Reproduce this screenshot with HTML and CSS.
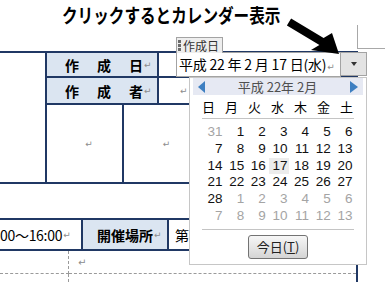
FILE: index.html
```html
<!DOCTYPE html>
<html lang="ja">
<head>
<meta charset="utf-8">
<title>カレンダー表示</title>
<link rel="stylesheet" href="styles.css">
</head>
<body>
<div class="page">
  <header class="head"><span class="title">クリックするとカレンダー表示</span></header>

  <section class="t1">
    <div class="c-left"></div>
    <div class="c-right">
      <div class="row r1">
        <div class="lbl">作　成　日<span class="ret">↵</span></div>
        <div class="val"></div>
      </div>
      <div class="row r2">
        <div class="lbl">作　成　者<span class="ret">↵</span></div>
        <div class="val v2"><span class="ret">↵</span></div>
      </div>
      <div class="row r3">
        <div class="cellA"><span class="ret">↵</span></div>
        <div class="cellB"><span class="ret">↵</span></div>
        <div class="cellC"></div>
      </div>
    </div>
  </section>

  <div class="gap"></div>

  <section class="t2">
    <div class="time">00～16:00<span class="ret">↵</span></div>
    <div class="lbl2">開催場所<span class="ret">↵</span></div>
    <div class="place">第</div>
  </section>

  <section class="t3">
    <div class="d1"></div>
    <div class="d2"><span class="ret">↵</span></div>
    <div class="d3"></div>
    <div class="d4"></div>
  </section>

  <div class="corner"></div>

  <div class="ctrl">
    <div class="tag"><span class="grip"><i></i><i></i><i></i></span>作成日</div>
    <div class="field-row">
      <div class="field">平成 22 年 2 月 17 日(水)<span class="ret">↵</span></div>
      <div class="drop"><span class="dtri"></span></div>
    </div>
  </div>

  <div class="cal">
    <div class="cal-bar">
      <span class="tri-l"></span>
      <span class="cal-title">平成 22年 2月</span>
      <span class="tri-r"></span>
    </div>
    <div class="cal-week">
      <span>日</span><span>月</span><span>火</span><span>水</span><span>木</span><span>金</span><span>土</span>
    </div>
    <div class="cal-sep"></div>
    <div class="cal-days">
      <span class="o">31</span><span>1</span><span>2</span><span>3</span><span>4</span><span>5</span><span>6</span>
      <span>7</span><span>8</span><span>9</span><span>10</span><span>11</span><span>12</span><span>13</span>
      <span>14</span><span>15</span><span>16</span><span class="sel">17</span><span>18</span><span>19</span><span>20</span>
      <span>21</span><span>22</span><span>23</span><span>24</span><span>25</span><span>26</span><span>27</span>
      <span>28</span><span class="o">1</span><span class="o">2</span><span class="o">3</span><span class="o">4</span><span class="o">5</span><span class="o">6</span>
      <span class="o">7</span><span class="o">8</span><span class="o">9</span><span class="o">10</span><span class="o">11</span><span class="o">12</span><span class="o">13</span>
    </div>
    <div class="cal-sep sep2"></div>
    <div class="cal-foot"><button class="today" type="button">今日(<u>T</u>)</button></div>
  </div>

  <svg class="arrow" width="385" height="282" viewBox="0 0 385 282" aria-hidden="true">
    <polygon points="291.1,18.6 323.6,38.1 332,33 339,54 311,50 319.4,44.9 286.9,25.4" fill="#000"/>
  </svg>
</div>
</body>
</html>
```

FILE: styles.css
```css
* { box-sizing: border-box; }
html, body { margin: 0; padding: 0; background: #fff; }
body {
  width: 385px;
  height: 282px;
  overflow: hidden;
  font-family: "Noto Sans CJK JP", "Noto Sans", sans-serif;
  color: #000;
}
.page {
  position: relative;
  width: 385px;
  height: 282px;
  overflow: hidden;
}

/* heading annotation */
.head {
  height: 51px;
  padding: 4px 0 0 62px;
}
.title {
  display: inline-block;
  font-size: 19.5px;
  line-height: 22px;
  font-weight: 700;
  white-space: nowrap;
  transform: scaleX(0.8);
  transform-origin: left top;
}

.ret {
  font-family: "DejaVu Sans", sans-serif;
  font-size: 9px;
  color: #8c8c8c;
  font-weight: 400;
  margin-left: 1px;
}

/* table 1 */
.t1 {
  display: flex;
  width: 358px;
  height: 133px;
  border-top: 2px solid #203864;
  border-bottom: 2px solid #203864;
  border-right: 2px solid #203864;
}
.c-left { width: 45px; }
.c-right {
  flex: 1;
  display: flex;
  flex-direction: column;
  border-left: 2px solid #203864;
}
.row { display: flex; }
.r1 { height: 25px; border-bottom: 2px solid #203864; }
.r2 { height: 27px; border-bottom: 2px solid #203864; }
.r3 { flex: 1; }
.lbl {
  width: 112px;
  background: #dbe5f1;
  border-right: 2px solid #203864;
  font-size: 14px;
  font-weight: 700;
  letter-spacing: 2px;
  padding-left: 18px;
  display: flex;
  align-items: center;
  white-space: nowrap;
}
.lbl .ret { letter-spacing: 0; margin-left: -1px; }
.val { flex: 1; display: flex; align-items: center; }
.v2 { padding-left: 20px; }
.cellA, .cellB {
  display: flex;
  align-items: center;
  justify-content: center;
  padding-left: 8px;
  border-right: 2px solid #203864;
}
.cellA { width: 77px; }
.cellB { width: 78px; }
.cellC { flex: 1; }

.gap { height: 34px; }

/* table 2 */
.t2 {
  display: flex;
  width: 358px;
  height: 33px;
  border-top: 2px solid #203864;
  border-bottom: 2px solid #203864;
  border-right: 2px solid #203864;
  font-size: 14px;
}
.time {
  width: 83px;
  border-right: 2px solid #203864;
  display: flex;
  align-items: center;
  white-space: nowrap;
  letter-spacing: -0.3px;
}
.lbl2 {
  width: 86px;
  background: #dbe5f1;
  border-right: 2px solid #203864;
  font-weight: 700;
  padding-left: 14px;
  display: flex;
  align-items: center;
  white-space: nowrap;
}
.place {
  flex: 1;
  padding-left: 6px;
  display: flex;
  align-items: center;
}

/* dashed area */
.t3 {
  display: grid;
  grid-template-columns: 69px 1fr;
  grid-template-rows: 23px 1fr;
  width: 358px;
  height: 31px;
  border-right: 2px solid #203864;
}
.d1 { border-right: 1px dashed #9a9a9a; border-bottom: 1px dashed #9a9a9a; }
.d2 { border-bottom: 1px dashed #9a9a9a; padding-left: 8px; display: flex; align-items: center; }
.d2 .ret { font-size: 10px; }
.d3 { border-right: 1px dashed #9a9a9a; }

/* page corner mark */
.corner {
  position: absolute;
  left: 357px;
  top: 25px;
  width: 28px;
  height: 24px;
  border-left: 1px solid #a8a8a8;
  border-bottom: 1px solid #a8a8a8;
}

/* content control */
.ctrl {
  position: absolute;
  left: 176px;
  top: 37px;
  width: 191px;
}
.tag {
  display: flex;
  align-items: center;
  width: 47px;
  height: 16px;
  margin-bottom: -1px;
  background: #eeeeee;
  border: 1px solid #a3a3a3;
  border-bottom: none;
  font-size: 12px;
  line-height: 14px;
  color: #333;
  padding-left: 1px;
  position: relative;
  z-index: 1;
}
.grip {
  display: flex;
  flex-direction: column;
  gap: 1px;
  margin-right: 2px;
}
.grip i {
  display: block;
  width: 3px;
  height: 3px;
  background: #6b6b6b;
}
.field-row { display: flex; }
.field {
  width: 165px;
  height: 25px;
  background: #fff;
  border: 1px solid #a3a3a3;
  font-size: 14px;
  line-height: 22px;
  padding-left: 2px;
  white-space: nowrap;
  letter-spacing: -0.2px;
}
.field .ret { letter-spacing: 0; }
.drop {
  width: 27px;
  height: 24px;
  margin-left: -1px;
  background: #e3e3e3;
  border: 1px solid #a3a3a3;
  display: flex;
  align-items: center;
  justify-content: center;
}
.dtri {
  width: 0;
  height: 0;
  border-left: 3.5px solid transparent;
  border-right: 3.5px solid transparent;
  border-top: 4px solid #333;
}

/* calendar popup */
.cal {
  position: absolute;
  left: 189px;
  top: 77px;
  width: 178px;
  height: 188px;
  background: #fff;
  border: 1px solid #c6c6c6;
  padding: 0 3px;
  font-size: 13px;
}
.cal-bar {
  height: 17px;
  background: #e6e9f3;
  display: flex;
  align-items: center;
  justify-content: space-between;
  padding: 0 5px;
}
.tri-l, .tri-r {
  width: 0;
  height: 0;
  border-top: 6.5px solid transparent;
  border-bottom: 6.5px solid transparent;
}
.tri-l { border-right: 7px solid #3e7fc1; }
.tri-r { border-left: 8px solid #3e7fc1; }
.cal-title {
  color: #4f4f4f;
  font-size: 13px;
  line-height: 17px;
  white-space: nowrap;
}
.cal-week {
  display: grid;
  grid-template-columns: repeat(7, 23px);
  height: 23px;
  line-height: 23px;
  padding-left: 4px;
  text-align: center;
}
.cal-sep {
  height: 1px;
  background: #c4c4c4;
  margin: 0 9px;
}
.cal-days {
  display: grid;
  grid-template-columns: repeat(7, 20px);
  grid-auto-rows: 16.8px;
  column-gap: 1.67px;
  margin: 5px 0 0 11px;
  text-align: right;
  color: #111;
  font-family: "Liberation Sans", "Noto Sans", sans-serif;
  font-size: 13.5px;
}
.cal-days span {
  line-height: 16.8px;
  padding-right: 1.5px;
}
.cal-days .o { color: #a4a4a4; }
.cal-days .sel { background: #ececec; }
.sep2 { margin-top: 4px; }
.cal-foot {
  display: flex;
  justify-content: center;
  padding-top: 5px;
}
.today {
  width: 60px;
  height: 24px;
  padding: 0;
  border: 1px solid #737373;
  border-radius: 3px;
  background: linear-gradient(#f6f6f6, #e6e6e6 50%, #d4d4d4);
  font-family: "Noto Sans CJK JP", "Noto Sans", sans-serif;
  font-size: 13px;
  color: #222;
  line-height: 20px;
}
.today u { text-decoration-thickness: 1px; text-underline-offset: 1px; }

.arrow {
  position: absolute;
  left: 0;
  top: 0;
  pointer-events: none;
}
```
